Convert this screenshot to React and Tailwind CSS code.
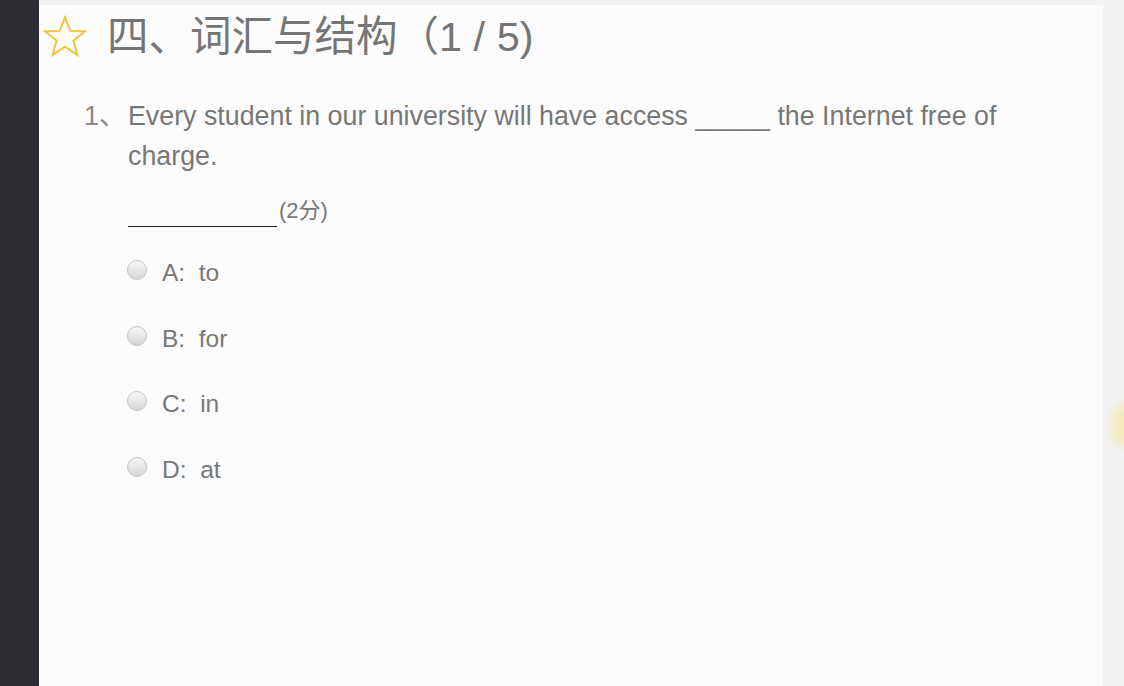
import React from 'react';

const options = [
  { key: 'A', text: 'to' },
  { key: 'B', text: 'for' },
  { key: 'C', text: 'in' },
  { key: 'D', text: 'at' },
];

function Star() {
  return (
    <svg width="46" height="44" viewBox="0 0 24 23" className="shrink-0">
      <polygon
        points="12,1.2 14.75,8.3 22.4,8.6 16.4,13.4 18.5,20.9 12,16.6 5.5,20.9 7.6,13.4 1.6,8.6 9.25,8.3"
        fill="none"
        stroke="#efc43a"
        strokeWidth="1"
        strokeLinejoin="miter"
      />
    </svg>
  );
}

function Radio() {
  return (
    <span className="mt-[7px] block h-[20px] w-[20px] shrink-0 rounded-full border border-[#c4c4c4] bg-gradient-to-b from-[#f7f7f7] to-[#d6d6d6]" />
  );
}

export default function App() {
  return (
    <div
      className="relative flex h-[686px] w-full overflow-hidden bg-[#f2f2f2]"
      style={{ fontFamily: '"Liberation Sans", Arial, "Noto Sans CJK SC", sans-serif' }}
    >
      {/* left dock */}
      <div className="w-[39px] shrink-0 bg-[#2e2f34]" />

      <div className="flex-1 pt-[5px] pr-[21px]">
        <div className="h-full bg-[#fcfcfc] pt-[7px]">
          {/* title */}
          <div className="flex items-center pl-[3px]">
            <Star />
            <h1 className="ml-[19px] text-[41.5px] leading-[50px] text-[#757575]">
              四、词汇与结构（1 / 5)
            </h1>
          </div>

          {/* question */}
          <div className="mt-[34px] flex pl-[45px] text-[26.8px] leading-[40px] text-[#777]">
            <span className="w-[44px] shrink-0 text-[#888]">1、</span>
            <div className="pr-[80px]">
              <p>Every student in our university will have access _____ the Internet free of charge.</p>

              <div className="mt-[23px] flex items-start">
                <span className="block h-[28px] w-[149px] border-b-[1.5px] border-[#222]" />
                <span className="ml-[2px] text-[22px] leading-[24px] text-[#777]">(2分)</span>
              </div>

              <div className="mt-[26px] flex flex-col gap-[25.5px]">
                {options.map((o) => (
                  <label key={o.key} className="flex items-start">
                    <span className="-ml-[1px]">
                      <Radio />
                    </span>
                    <span className="ml-[15px] whitespace-pre text-[24.5px] leading-[40px] text-[#777]">
                      {o.key}:  {o.text}
                    </span>
                  </label>
                ))}
              </div>
            </div>
          </div>
        </div>
      </div>

      {/* floating glow at right edge */}
      <div className="absolute right-[-16px] top-[404px] h-[42px] w-[28px] rounded-full bg-[#f3e7a4] opacity-70 blur-[5px]" />
    </div>
  );
}
